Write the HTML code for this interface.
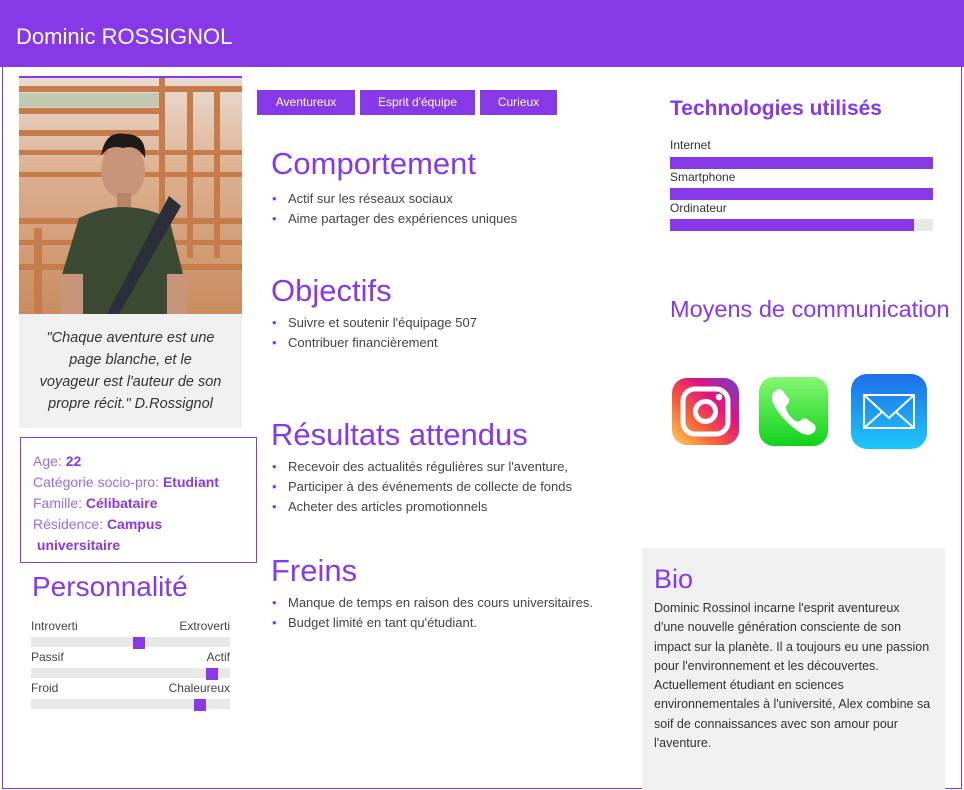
<!DOCTYPE html>
<html><head><meta charset="utf-8"><style>
*{margin:0;padding:0;box-sizing:border-box}
body{width:964px;height:790px;background:#fff;font-family:"Liberation Sans",sans-serif;position:relative;overflow:hidden;color:#333}
.a{position:absolute}
.hdr{left:0;top:0;width:964px;height:67px;background:#8739e8;color:#fff;font-size:22px;padding:24px 0 0 16px}
.frame{left:2px;top:67px;width:960px;height:722px;border:1px solid #8739e8;border-top:none}
.p{color:#8739e8}
h2{position:absolute;font-weight:normal;color:#8739e8;font-size:31px}
ul{position:absolute;font-size:13px;line-height:20px;color:#444;list-style:none}
ul li:before{content:"•";color:#8739e8;margin:0 9px 0 -16px;display:inline-block;width:7px}
ul li{padding-left:16px}
.tag{top:90px;height:25px;background:#8739e8;color:#fff;font-size:12px;text-align:center;line-height:24px}
.bar{height:10px;background:#e8e8e8;width:199px;left:31px}
.knob{position:absolute;top:-4px;width:12px;height:12px;background:#8739e8}
.sl{font-size:12px;color:#444;left:31px;width:199px;display:flex;justify-content:space-between}
.tb{left:670px;width:263px;height:12px;background:#e8e8e8}
.tl{left:670px;font-size:12px;color:#333}
</style></head><body>
<div class="a hdr">Dominic ROSSIGNOL</div>
<div class="a frame"></div>
<div class="a" style="left:19px;top:76px;width:223px;height:238px;background:linear-gradient(180deg,#e9dcd2,#dcb090 40%,#c88c60);border-top:2px solid #8739e8">
<svg width="223" height="236" viewBox="0 0 223 236">
<g fill="#c57c4a"><rect x="0" y="8" width="223" height="6"/><rect x="0" y="30" width="140" height="6"/><rect x="0" y="52" width="140" height="6"/><rect x="0" y="72" width="223" height="5"/><rect x="0" y="94" width="223" height="5"/><rect x="0" y="140" width="223" height="6"/><rect x="0" y="162" width="223" height="5"/><rect x="0" y="186" width="223" height="6"/><rect x="140" y="0" width="6" height="236"/><rect x="168" y="10" width="6" height="170"/><rect x="195" y="10" width="6" height="170"/><rect x="15" y="150" width="8" height="86"/></g>
<rect x="0" y="15" width="140" height="14" fill="#a9c4a8" opacity=".6"/>
<ellipse cx="104" cy="93" rx="22" ry="28" fill="#c9957a"/>
<path d="M82 78 Q86 52 106 56 Q128 56 126 80 Q118 66 104 70 Q90 66 82 78Z" fill="#1e1a1a"/>
<rect x="98" y="115" width="14" height="14" fill="#b98466"/>
<path d="M60 140 Q104 118 150 140 L165 200 L150 205 L148 236 L64 236 L60 200 L42 200Z" fill="#3c4a34"/>
<path d="M150 118 L162 128 L100 236 L88 236Z" fill="#2a2f3a"/>
<rect x="42" y="196" width="22" height="40" fill="#c9957a"/><rect x="148" y="196" width="20" height="40" fill="#c9957a"/>
</svg></div>
<div class="a" style="left:19px;top:314px;width:223px;height:114px;background:#f0f0f0;font-style:italic;font-size:14.5px;line-height:22px;text-align:center;color:#333;padding:13px 20px 0">"Chaque aventure est une page blanche, et le voyageur est l'auteur de son propre récit." D.Rossignol</div>
<div class="a" style="left:20px;top:437px;width:237px;height:126px;border:1px solid #8739e8;padding:13px 12px;font-size:14px;line-height:21px;color:#9a6ae8">Age: <b class="p">22</b><br>Catégorie socio-pro: <b class="p">Etudiant</b><br>Famille: <b class="p">Célibataire</b><br>Résidence: <b class="p">Campus<br>&nbsp;universitaire</b></div>
<div class="a p" style="left:32px;top:571px;font-size:28px">Personnalité</div>
<div class="a sl" style="top:619px"><span>Introverti</span><span>Extroverti</span></div>
<div class="a bar" style="top:637px"><div class="knob" style="left:102px;top:0;height:12px"></div></div>
<div class="a sl" style="top:650px"><span>Passif</span><span>Actif</span></div>
<div class="a bar" style="top:668px"><div class="knob" style="left:175px;top:0"></div></div>
<div class="a sl" style="top:681px"><span>Froid</span><span>Chaleureux</span></div>
<div class="a bar" style="top:699px"><div class="knob" style="left:163px;top:0"></div></div>

<div class="a tag" style="left:257px;width:98px">Aventureux</div>
<div class="a tag" style="left:360px;width:115px">Esprit d'équipe</div>
<div class="a tag" style="left:480px;width:77px">Curieux</div>

<h2 style="left:271px;top:146px">Comportement</h2>
<ul style="left:272px;top:189px"><li>Actif sur les réseaux sociaux</li><li>Aime partager des expériences uniques</li></ul>
<h2 style="left:271px;top:273px">Objectifs</h2>
<ul style="left:272px;top:313px"><li>Suivre et soutenir l'équipage 507</li><li>Contribuer financièrement</li></ul>
<h2 style="left:271px;top:417px">Résultats attendus</h2>
<ul style="left:272px;top:457px"><li>Recevoir des actualités régulières sur l'aventure,</li><li>Participer à des événements de collecte de fonds</li><li>Acheter des articles promotionnels</li></ul>
<h2 style="left:271px;top:553px">Freins</h2>
<ul style="left:272px;top:593px"><li>Manque de temps en raison des cours universitaires.</li><li>Budget limité en tant qu'étudiant.</li></ul>

<div class="a p" style="left:670px;top:97px;font-size:21px;font-weight:bold">Technologies utilisés</div>
<div class="a tl" style="top:138px">Internet</div><div class="a tb" style="top:157px;background:#8739e8"></div>
<div class="a tl" style="top:170px">Smartphone</div><div class="a tb" style="top:188px;background:#8739e8"></div>
<div class="a tl" style="top:201px">Ordinateur</div><div class="a tb" style="top:219px"><div style="width:244px;height:12px;background:#8739e8"></div></div>
<div class="a p" style="left:670px;top:296px;font-size:23.5px">Moyens de communication</div>

<svg class="a" style="left:672px;top:378px" width="67" height="67" viewBox="0 0 67 67"><defs><linearGradient id="ig" x1="0" y1="1" x2="1" y2="0"><stop offset="0" stop-color="#fdd155"/><stop offset=".35" stop-color="#f5603a"/><stop offset=".65" stop-color="#e3127f"/><stop offset="1" stop-color="#6a3fd0"/></linearGradient></defs><rect width="67" height="67" rx="15" fill="url(#ig)"/><rect x="11" y="11" width="45" height="45" rx="12" fill="none" stroke="#fff" stroke-width="5"/><circle cx="33.5" cy="33.5" r="10" fill="none" stroke="#fff" stroke-width="5"/><circle cx="47" cy="19" r="3.3" fill="#fff"/></svg>
<svg class="a" style="left:759px;top:377px" width="69" height="69" viewBox="0 0 69 69"><defs><linearGradient id="ph" x1="0" y1="0" x2="0" y2="1"><stop offset="0" stop-color="#86f774"/><stop offset="1" stop-color="#0fd21a"/></linearGradient></defs><rect width="69" height="69" rx="15" fill="url(#ph)"/><path d="M15 15 Q20 10 24 14 L30 22 Q31 26 27 29 Q26 32 31 39 Q37 46 41 44 Q44 40 48 42 L56 48 Q58 53 54 56 Q47 61 36 52 Q22 41 15 28 Q11 20 15 15Z" fill="#fff"/></svg>
<svg class="a" style="left:851px;top:374px" width="76" height="75" viewBox="0 0 76 75"><defs><linearGradient id="ml" x1="0" y1="0" x2="0" y2="1"><stop offset="0" stop-color="#1e6ee8"/><stop offset="1" stop-color="#1ec7fb"/></linearGradient></defs><rect width="76" height="75" rx="16" fill="url(#ml)"/><rect x="13" y="21" width="50" height="33" fill="none" stroke="#fff" stroke-width="2"/><path d="M13 21 L38 44 L63 21 M13 54 L31 38 M63 54 L45 38" fill="none" stroke="#fff" stroke-width="2"/></svg>

<div class="a" style="left:642px;top:548px;width:303px;height:242px;background:#f0f0f0;padding:16px 12px">
<div class="p" style="font-size:27px;margin-bottom:4px">Bio</div>
<div style="font-size:12.5px;line-height:19.3px;color:#333">Dominic Rossinol incarne l'esprit aventureux d'une nouvelle génération consciente de son impact sur la planète. Il a toujours eu une passion pour l'environnement et les découvertes. Actuellement étudiant en sciences environnementales à l'université, Alex combine sa soif de connaissances avec son amour pour l'aventure.</div></div>
</body></html>
